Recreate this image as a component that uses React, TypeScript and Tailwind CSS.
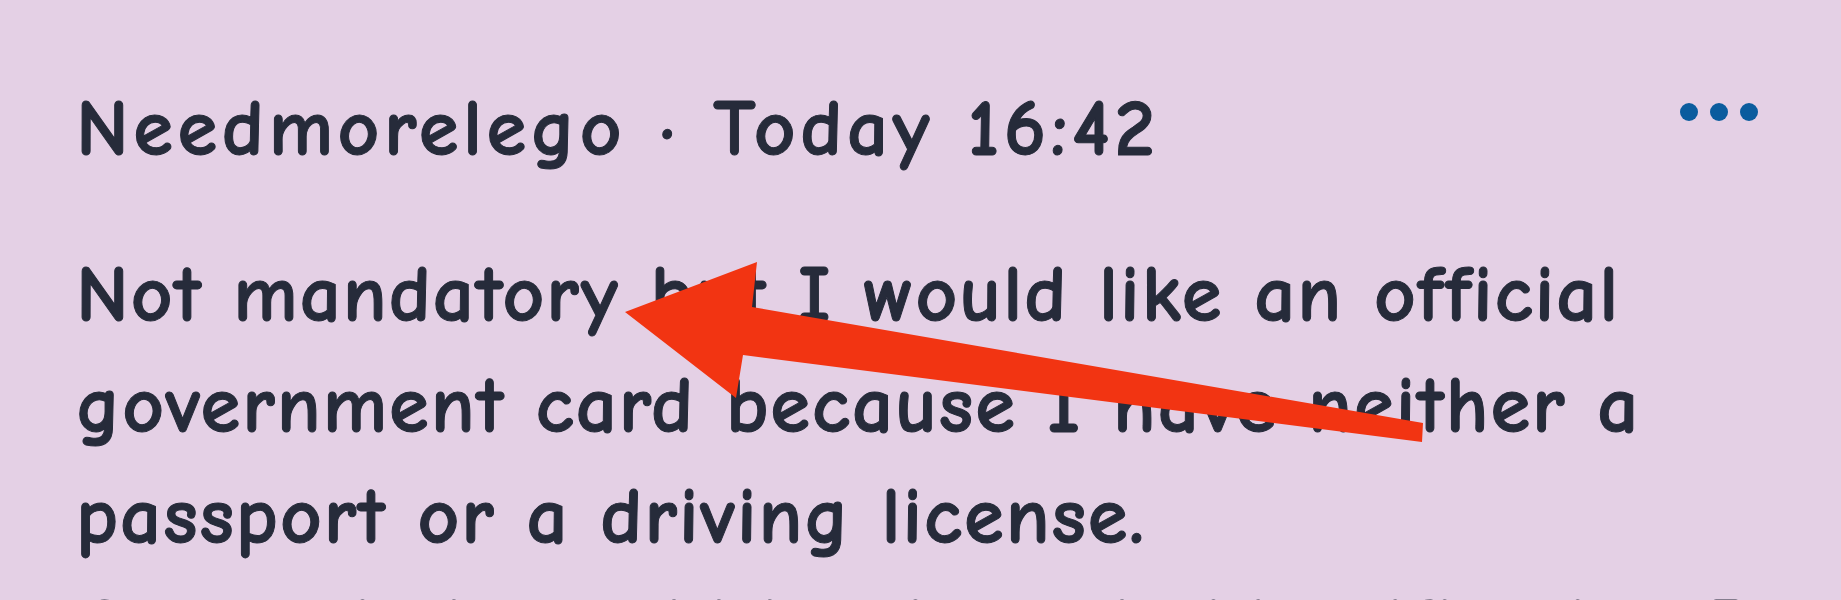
export default function App() {
  return (
    <div className="relative h-[600px] w-full overflow-hidden bg-[#e4d0e5] px-[76px] pt-[73px] pr-[83px] font-['Comic_Sans_MS','Comic_Neue','DejaVu_Sans',sans-serif] text-[#262b3a]">
      {/* post header */}
      <div className="flex items-start justify-between">
        <div className="text-[81px] font-bold leading-[112px] tracking-[4.5px] whitespace-nowrap [-webkit-text-stroke:1px_#262b3a]">
          Needmorelego · Today 16:42
        </div>
        <button className="flex gap-[12px] pt-[30px]">
          <span className="block h-[18px] w-[18px] rounded-full bg-[#0b5c9e]" />
          <span className="block h-[18px] w-[18px] rounded-full bg-[#0b5c9e]" />
          <span className="block h-[18px] w-[18px] rounded-full bg-[#0b5c9e]" />
        </button>
      </div>

      {/* post body */}
      <p className="mt-[54px] text-[81px] font-bold leading-[111px] tracking-[1.9px] [-webkit-text-stroke:1px_#262b3a]">
        Not mandatory but I would like an official government card because I
        have neither a passport or a driving license.
        <br />
        Currently it would be the only identification I have.
      </p>

      {/* red annotation arrow */}
      <svg
        className="pointer-events-none absolute left-0 top-0"
        width="1841"
        height="600"
        viewBox="0 0 1841 600"
      >
        <polygon
          points="625,312 757,262 752,307 1423,423 1422,442 743,355 736,398"
          fill="#f23412"
        />
      </svg>
    </div>
  );
}
